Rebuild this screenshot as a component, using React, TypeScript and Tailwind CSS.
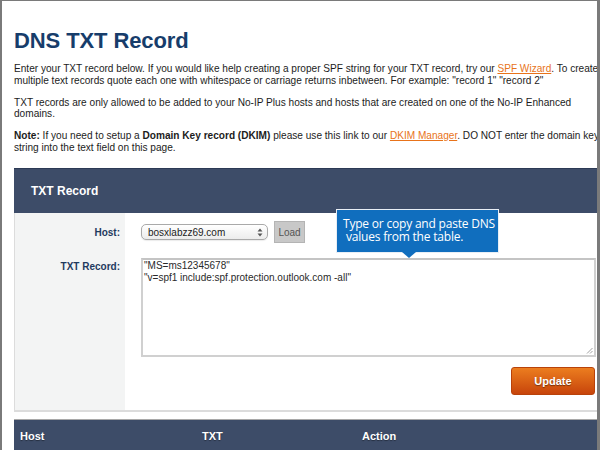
import React from 'react';

function SelectArrows() {
  return (
    <svg width="6" height="9" viewBox="0 0 6 9" className="shrink-0">
      <path d="M3 0.5 L5.5 3.5 H0.5 Z" fill="#555" />
      <path d="M3 8.5 L5.5 5.5 H0.5 Z" fill="#555" />
    </svg>
  );
}

export default function App() {
  return (
    <div
      className="relative w-[600px] h-[450px] overflow-hidden bg-white border-t border-l-2 border-r-[3px] border-[#7a7a7a]"
      style={{ fontFamily: '"Liberation Sans", Arial, sans-serif' }}
    >
      <div className="w-[620px] pl-[12px]">
        <h1 className="mt-[27px] text-[22px] leading-[26px] font-bold text-[#173d6b] tracking-[-0.1px]">
          DNS TXT Record
        </h1>

        <div className="mt-[9px] text-[10.1px] leading-[11.5px] text-[#1c1c1c] whitespace-nowrap">
          <p>
            Enter your TXT record below. If you would like help creating a proper SPF string for your TXT record, try our{' '}
            <a className="text-[#e8731a] underline">SPF Wizard</a>. To create
            <br />
            multiple text records quote each one with whitespace or carriage returns inbetween. For example: "record 1" "record 2"
          </p>
          <p className="mt-[10.5px]">
            TXT records are only allowed to be added to your No-IP Plus hosts and hosts that are created on one of the No-IP Enhanced
            <br />
            domains.
          </p>
          <p className="mt-[10.5px]">
            <b>Note:</b> If you need to setup a <b>Domain Key record (DKIM)</b> please use this link to our{' '}
            <a className="text-[#e8731a] underline">DKIM Manager</a>. DO NOT enter the domain key
            <br />
            string into the text field on this page.
          </p>
        </div>

        {/* TXT Record panel */}
        <div className="mt-[15px] w-[600px]">
          <div className="h-[45px] bg-[#3d4c68] border-t border-[#2c3a55] flex items-center pl-[17px]">
            <span className="text-white font-bold text-[12px]">TXT Record</span>
          </div>
          <div className="flex border-l border-b-2 border-[#dcdcdc]">
            <div className="w-[110px] shrink-0 bg-[#f3f4f4] text-[10px] font-bold text-[#1f3a5e] text-right pr-[5px]">
              <div className="h-[22px] mt-[8px] flex items-center justify-end">Host:</div>
              <div className="mt-[18px] leading-[12px]">TXT Record:</div>
            </div>
            <div className="flex-1 pl-[16px] pr-[18px] pt-[8px] pb-[15px]">
              <div className="h-[22px] flex items-center gap-[6px]">
                <div className="w-[127px] h-[16px] rounded-[5px] border border-[#a9a9a9] bg-gradient-to-b from-white to-[#ececec] flex items-center justify-between pl-[6px] pr-[4px] text-[10px] text-[#222] shadow-[0_1px_1px_rgba(0,0,0,0.08)]">
                  <span>bosxlabzz69.com</span>
                  <SelectArrows />
                </div>
                <div className="w-[31px] h-[22px] bg-[#c8c8c8] border border-[#b4b4b4] flex items-center justify-center text-[10px] text-[#555]">
                  Load
                </div>
              </div>
              <div className="mt-[15px] h-[99px] border-2 border-[#d0d0d0] border-t-[#c4c4c4] bg-white relative px-[1px] text-[10px] leading-[11.5px] text-[#2a2a2a]">
                <div>"MS=ms12345678"</div>
                <div>"v=spf1 include:spf.protection.outlook.com -all"</div>
                <svg width="7" height="7" viewBox="0 0 7 7" className="absolute right-[1px] bottom-[1px]">
                  <path d="M6.5 1 L1 6.5 M6.5 4 L4 6.5" stroke="#888" strokeWidth="0.8" />
                </svg>
              </div>
              <div className="mt-[10px] flex justify-end pr-[1px]">
                <div className="w-[84px] h-[28px] rounded-[3px] border border-[#b8420a] bg-gradient-to-b from-[#ec7d1f] to-[#c7440b] flex items-center justify-center text-white font-bold text-[11px] [text-shadow:0_1px_1px_rgba(0,0,0,0.45)]">
                  Update
                </div>
              </div>
            </div>
          </div>

          {/* table header */}
          <div className="mt-[7px] border-t border-[#a8a8a8] h-[34px] bg-[#3d4c68] grid grid-cols-[182px_160px_1fr] items-center text-white font-bold text-[11px] px-[6px] [text-shadow:0_1px_1px_rgba(0,0,0,0.4)]">
            <span>Host</span>
            <span>TXT</span>
            <span>Action</span>
          </div>
        </div>
      </div>

      {/* callout */}
      <div className="absolute left-[334px] top-[208px]">
        <div
          className="w-[163px] h-[44px] bg-[#106ebe] border border-[#e8eef5] text-white text-[12px] leading-[12.5px] pl-[6px] pt-[8px] whitespace-pre tracking-[-0.2px]"
          style={{ fontFamily: '"Open Sans", "Noto Sans", sans-serif' }}
        >
          {'Type or copy and paste DNS\n values from the table.'}
        </div>
        <svg width="14" height="7" viewBox="0 0 14 7" className="absolute left-[66px] top-[43px]">
          <path d="M0 0 L7 6 L14 0 Z" fill="#106ebe" />
        </svg>
      </div>
    </div>
  );
}
